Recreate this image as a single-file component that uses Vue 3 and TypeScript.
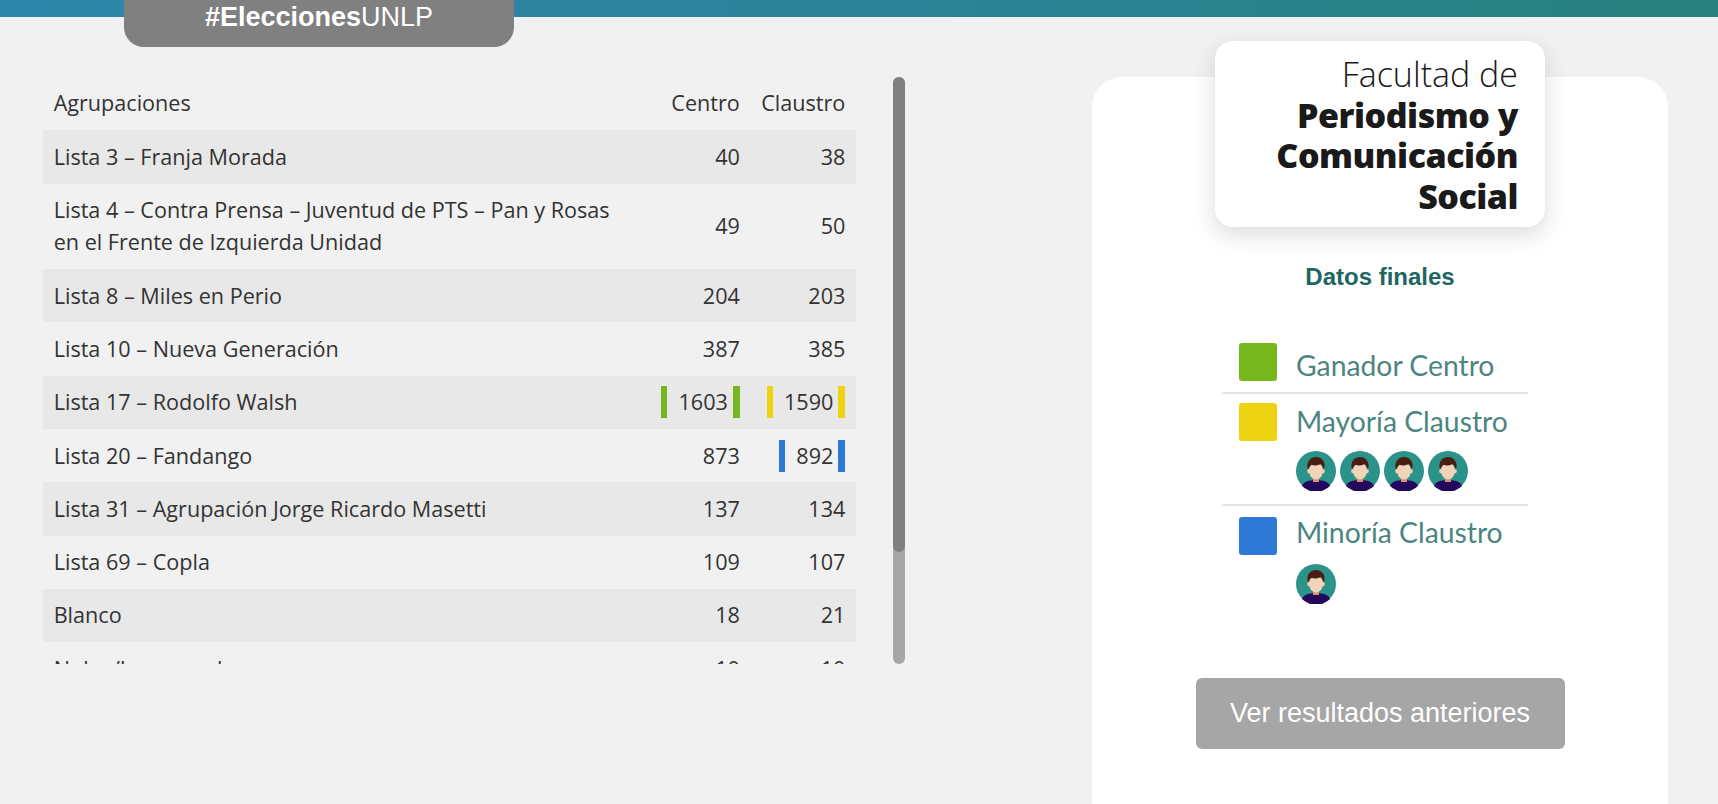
<script setup lang="ts">
type Mark = "" | "green" | "yellow" | "blue";

interface Row {
    name: string;
    second?: string;
    centro: number;
    claustro: number;
    centroMark?: Mark;
    claustroMark?: Mark;
}

const rows: Row[] = [
    { name: "Lista 3 – Franja Morada", centro: 40, claustro: 38 },
    {
        name: "Lista 4 – Contra Prensa – Juventud de PTS – Pan y Rosas",
        second: "en el Frente de Izquierda Unidad",
        centro: 49,
        claustro: 50,
    },
    { name: "Lista 8 – Miles en Perio", centro: 204, claustro: 203 },
    { name: "Lista 10 – Nueva Generación", centro: 387, claustro: 385 },
    { name: "Lista 17 – Rodolfo Walsh", centro: 1603, claustro: 1590, centroMark: "green", claustroMark: "yellow" },
    { name: "Lista 20 – Fandango", centro: 873, claustro: 892, claustroMark: "blue" },
    { name: "Lista 31 – Agrupación Jorge Ricardo Masetti", centro: 137, claustro: 134 },
    { name: "Lista 69 – Copla", centro: 109, claustro: 107 },
    { name: "Blanco", centro: 18, claustro: 21 },
    { name: "Nulos/Impugnados", centro: 10, claustro: 10 },
];
</script>

<template>
    <div class="page">
        <div class="topbar"></div>
        <div class="hashtag"><b>#Elecciones</b>UNLP</div>

        <main class="content">
            <section class="results">
                <div class="results__scroll">
                    <table class="results__table">
                        <colgroup>
                            <col />
                            <col class="col-centro" />
                            <col class="col-claustro" />
                        </colgroup>
                        <thead>
                            <tr>
                                <th class="name">Agrupaciones</th>
                                <th>Centro</th>
                                <th>Claustro</th>
                            </tr>
                        </thead>
                        <tbody>
                            <tr v-for="row in rows" :key="row.name">
                                <td class="name">
                                    {{ row.name }}<template v-if="row.second"><br />{{ row.second }}</template>
                                </td>
                                <td>
                                    <span :class="['num', row.centroMark]">{{ row.centro }}</span>
                                </td>
                                <td>
                                    <span :class="['num', row.claustroMark]">{{ row.claustro }}</span>
                                </td>
                            </tr>
                        </tbody>
                    </table>
                </div>
                <div class="scrollbar"><div class="scrollbar__thumb"></div></div>
            </section>

            <aside class="card">
                <div class="logo">
                    <span class="logo__light">Facultad de</span>
                    <span class="logo__bold">Periodismo y</span>
                    <span class="logo__bold">Comunicación</span>
                    <span class="logo__bold">Social</span>
                </div>

                <h2 class="card__title">Datos finales</h2>

                <div class="legend">
                    <div class="legend__row legend__row_first">
                        <i class="swatch swatch_green"></i>
                        <div class="legend__label legend__label_first">Ganador Centro</div>
                    </div>
                    <div class="legend__row legend__row_middle">
                        <i class="swatch swatch_yellow"></i>
                        <div>
                            <div class="legend__label">Mayoría Claustro</div>
                            <div class="avatars">
                                <svg v-for="n in 4" :key="n" class="avatar" viewBox="0 0 40 40">
                                    <circle cx="20" cy="20" r="20" fill="#2b9389" />
                                    <path d="M6 35c1-4 7-6 14-6s13 2 14 6a20 20 0 0 1-28 0z" fill="#23075c" />
                                    <rect x="17" y="25" width="6" height="6" fill="#e08f70" />
                                    <ellipse cx="12.8" cy="20" rx="1.6" ry="2.2" fill="#f3d3b8" />
                                    <ellipse cx="27.2" cy="20" rx="1.6" ry="2.2" fill="#f3d3b8" />
                                    <ellipse cx="20" cy="20" rx="7" ry="8.5" fill="#f3d3b8" />
                                    <path d="M12 19c-2.500-9 3-13 8-13s10.500 4 8 13c-.8-3-2-5-3.500-6-3 1.800-6.500 1.800-9 .8-1.500 1-2.700 2.700-3.500 5.200z" fill="#4b1d12" />
                                </svg>
                            </div>
                        </div>
                    </div>
                    <div class="legend__row legend__row_last">
                        <i class="swatch swatch_blue"></i>
                        <div>
                            <div class="legend__label legend__label_last">Minoría Claustro</div>
                            <div class="avatars avatars_last">
                                <svg class="avatar" viewBox="0 0 40 40">
                                    <circle cx="20" cy="20" r="20" fill="#2b9389" />
                                    <path d="M6 35c1-4 7-6 14-6s13 2 14 6a20 20 0 0 1-28 0z" fill="#23075c" />
                                    <rect x="17" y="25" width="6" height="6" fill="#e08f70" />
                                    <ellipse cx="12.8" cy="20" rx="1.6" ry="2.2" fill="#f3d3b8" />
                                    <ellipse cx="27.2" cy="20" rx="1.6" ry="2.2" fill="#f3d3b8" />
                                    <ellipse cx="20" cy="20" rx="7" ry="8.5" fill="#f3d3b8" />
                                    <path d="M12 19c-2.500-9 3-13 8-13s10.500 4 8 13c-.8-3-2-5-3.500-6-3 1.800-6.500 1.800-9 .8-1.500 1-2.700 2.700-3.500 5.200z" fill="#4b1d12" />
                                </svg>
                            </div>
                        </div>
                    </div>
                </div>

                <button class="card__button" type="button">Ver resultados anteriores</button>
            </aside>
        </main>
    </div>
</template>

<style>
html,
body {
    margin: 0;
    background-color: #f1f1f1;
    overflow: hidden;
}
</style>

<style scoped>
.page {
    position: relative;
    height: 804px;
    overflow: hidden;
    background-color: #f1f1f1;
}

.topbar {
    height: 17px;
    background: linear-gradient(90deg, #2e86ab 0%, #2b8499 50%, #27807c 100%);
}

.hashtag {
    position: absolute;
    top: 0;
    left: 124px;

    width: 390px;
    height: 47px;
    padding-top: 1px;
    box-sizing: border-box;

    color: #fff;
    font-family: "Liberation Sans", Arial, sans-serif;
    font-size: 27px;
    line-height: 32px;
    text-align: center;

    background-color: #808080;
    border-radius: 0 0 20px 20px;
}

.content {
    display: flex;
    align-items: flex-start;

    padding: 60px 50px 0 43px;
}

.results {
    display: flex;
    gap: 37px;
}

.results__scroll {
    width: 813px;
    height: 587px;
    overflow: hidden;
}

.results__table {
    width: 100%;
    table-layout: fixed;
    border-collapse: collapse;

    color: #333;
    font-family: "Open Sans", sans-serif;
    font-size: 21.6px;
    line-height: 32px;
}

.col-centro {
    width: 100px;
}

.col-claustro {
    width: 105.5px;
}

.results__table th,
.results__table td {
    padding: 10.67px;
    font-weight: 400;
    text-align: right;
    white-space: nowrap;
}

.results__table th {
    padding-top: 9.67px;
    padding-bottom: 11.67px;
}

.results__table .name {
    text-align: left;
}

.results__table tbody tr:nth-child(odd) {
    background-color: #e8e8e8;
}

.num {
    display: inline-block;
}

.num.green,
.num.yellow,
.num.blue {
    padding: 0 5px 0 11px;
    border-left: 6px solid;
    border-right: 7px solid;
}

.num.green {
    border-color: #76b71e;
}

.num.yellow {
    border-color: #edd311;
}

.num.blue {
    border-color: #2e79d8;
}

.scrollbar {
    width: 12px;
    height: 587px;
    background-color: #a6a6a6;
    border-radius: 6px;
}

.scrollbar__thumb {
    height: 475px;
    background-color: #808080;
    border-radius: 6px;
}

.card {
    position: relative;

    display: flex;
    flex-direction: column;
    align-items: center;

    width: 576px;
    height: 760px;
    margin-left: 187px;
    padding-top: 150px;
    box-sizing: border-box;

    background-color: #fff;
    border-radius: 30px 30px 0 0;
}

.logo {
    position: absolute;
    top: -36px;
    left: 123px;

    display: flex;
    flex-direction: column;
    align-items: flex-end;

    width: 330px;
    height: 186px;
    padding: 13px 27px 0 0;
    box-sizing: border-box;

    color: #1a1a1a;
    font-family: "Open Sans", sans-serif;
    font-size: 34px;
    line-height: 40.5px;

    background-color: #fff;
    border-radius: 18px;
    box-shadow: 0 8px 24px rgba(0, 0, 0, 0.14);
}

.logo__light {
    font-weight: 300;
}

.logo__bold {
    font-weight: 800;
    letter-spacing: -0.5px;
}

.card__title {
    margin: 36px 0 0;

    color: #1d6760;
    font-family: "Liberation Sans", Arial, sans-serif;
    font-size: 24px;
    font-weight: 700;
    line-height: 28px;
}

.legend {
    align-self: flex-start;

    width: 306px;
    margin: 52px 0 0 130px;
}

.legend__row {
    display: flex;
    gap: 19px;

    padding-left: 17px;
    border-top: 2px solid #e4e4e4;
}

.legend__row_first {
    padding-bottom: 9px;
    border-top: 0;
}

.legend__row_middle {
    padding-top: 9px;
    padding-bottom: 13px;
}

.legend__row_last {
    padding-top: 11px;
    padding-bottom: 11px;
}

.swatch {
    flex: none;
    width: 38px;
    height: 38px;
    border-radius: 3px;
}

.swatch_green {
    background-color: #76b71e;
}

.swatch_yellow {
    background-color: #edd311;
}

.swatch_blue {
    background-color: #2e79d8;
}

.legend__label {
    color: #4c8580;
    font-family: Lato, sans-serif;
    font-size: 28.3px;
    line-height: 36px;
}

.legend__label_first {
    margin-top: 4px;
}

.legend__label_last {
    margin-top: -3px;
}

.avatars {
    display: flex;
    gap: 4px;
    margin-top: 12px;
}

.avatars_last {
    margin-top: 14px;
}

.avatar {
    display: block;
    width: 40px;
    height: 40px;
}

.card__button {
    width: 369px;
    height: 71px;
    margin-top: 63px;

    color: #fff;
    font-family: "Liberation Sans", Arial, sans-serif;
    font-size: 27px;

    background-color: #a6a6a6;
    border: 0;
    border-radius: 6px;
}
</style>
